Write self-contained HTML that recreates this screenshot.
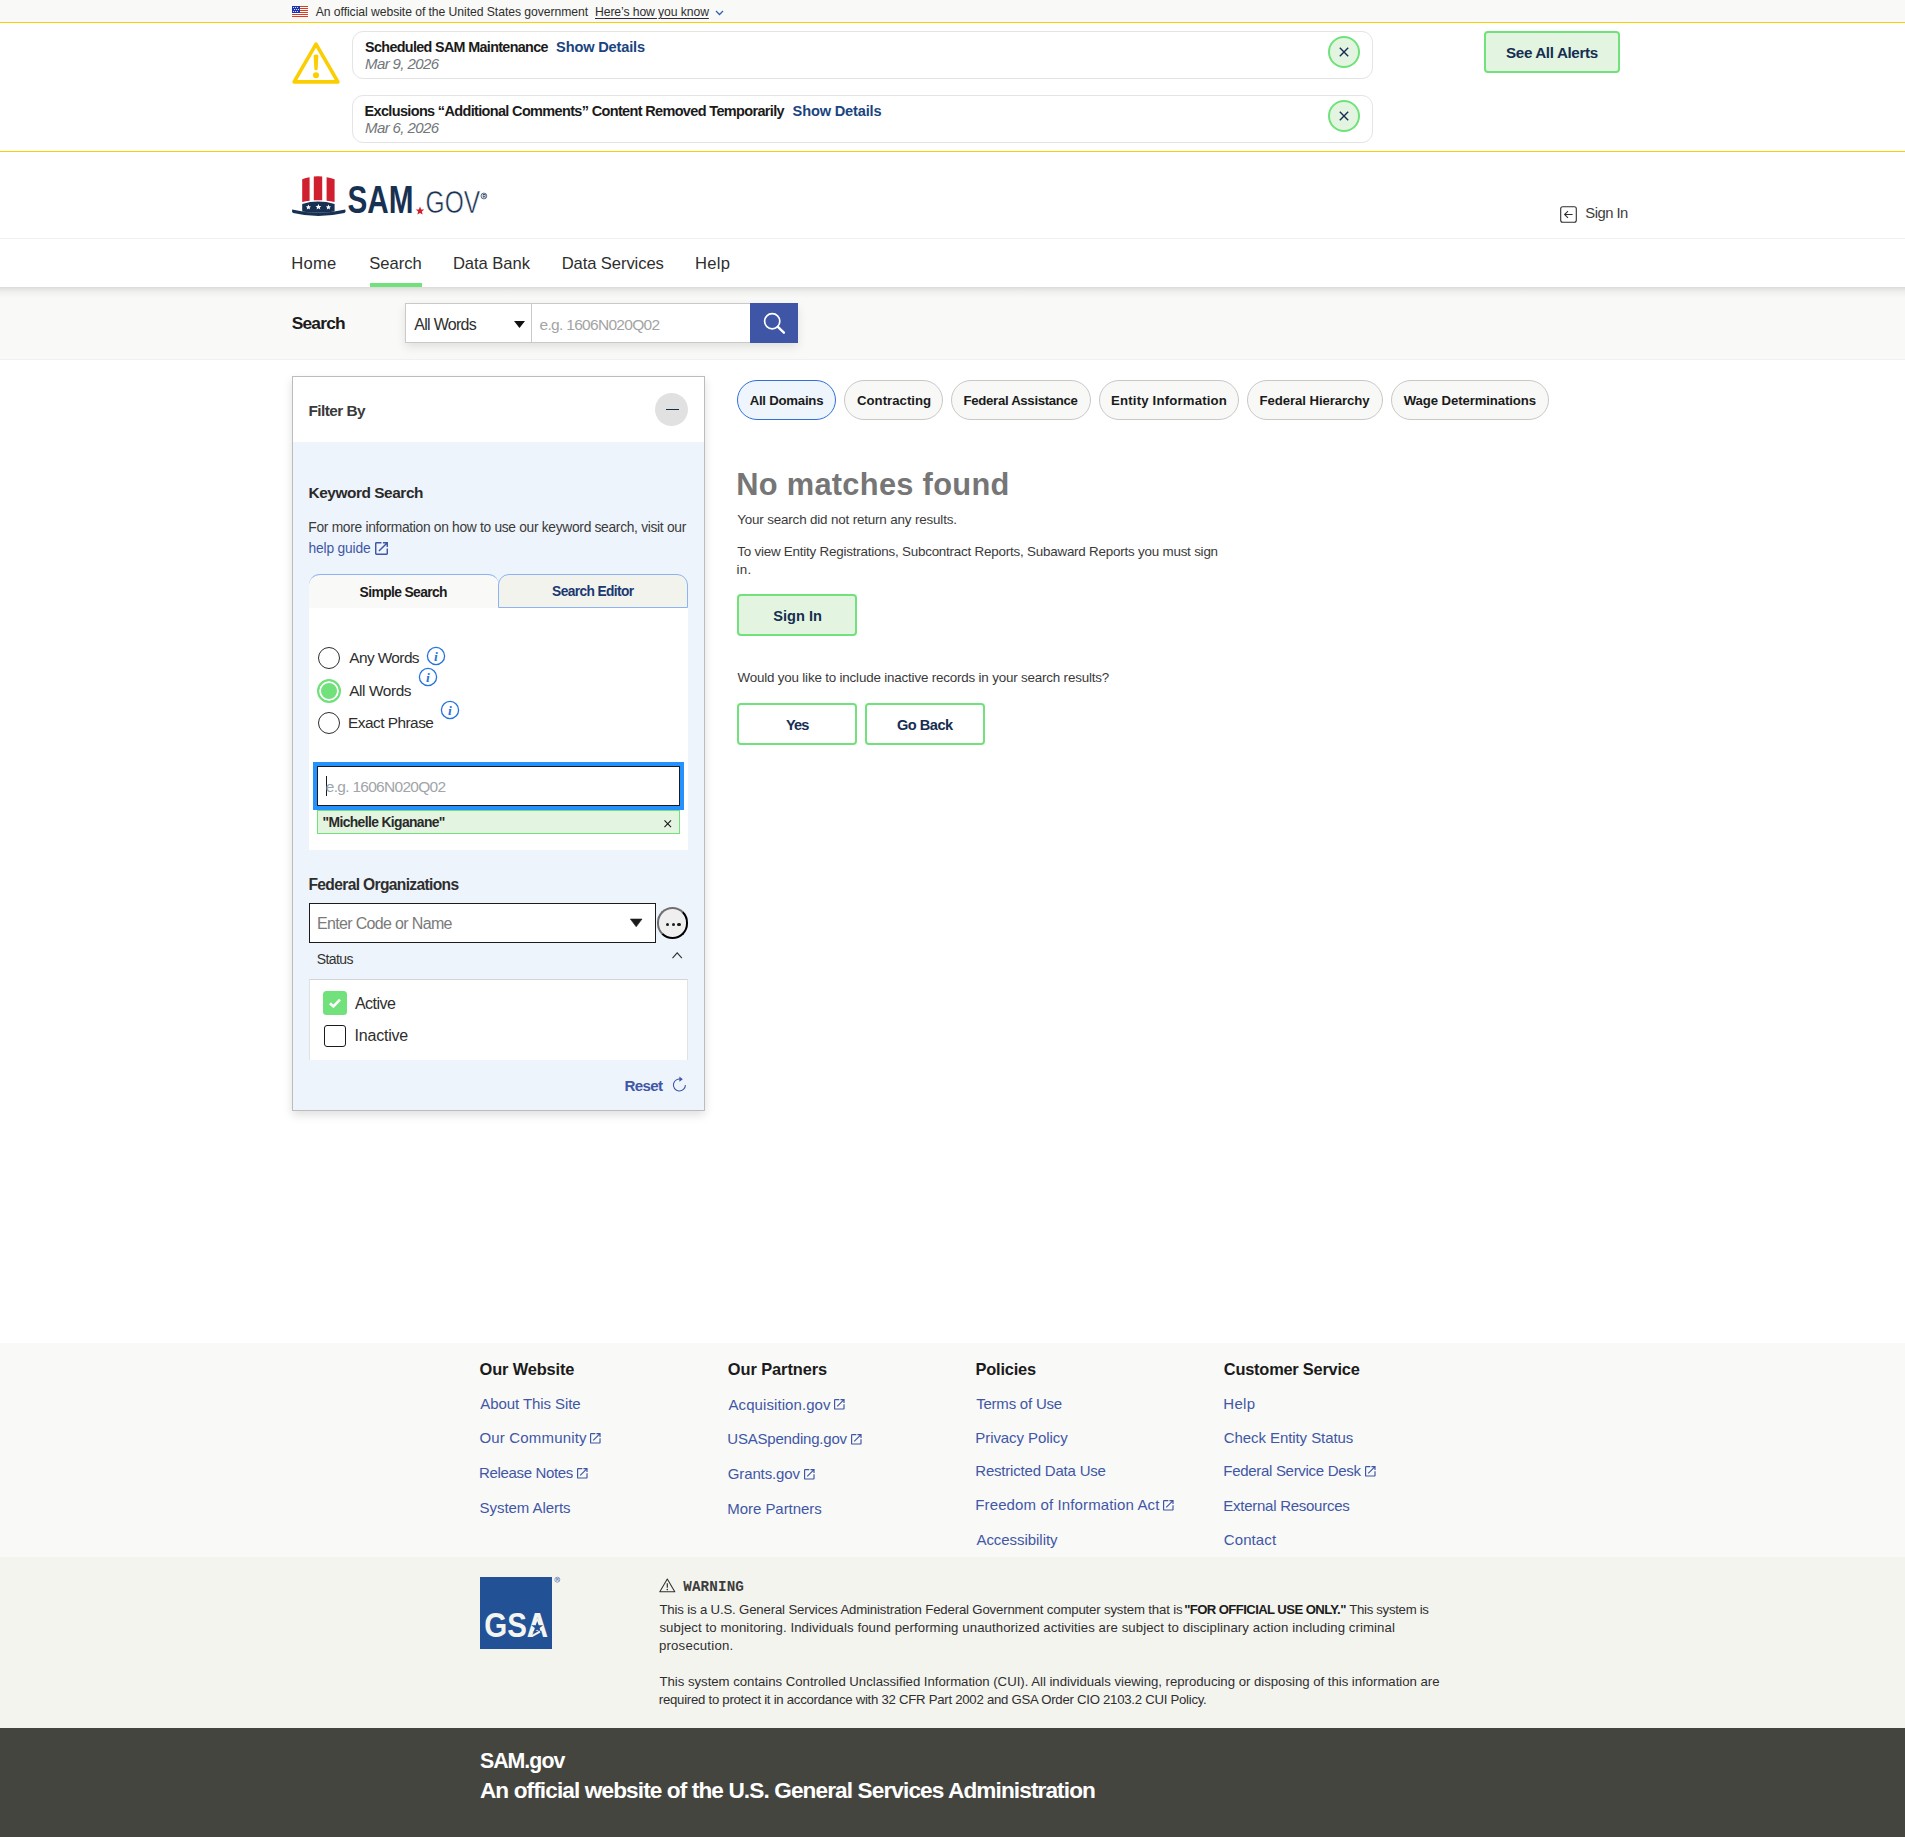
<!DOCTYPE html>
<html lang="en">
<head>
<meta charset="utf-8">
<title>SAM.gov | Search</title>
<style>
*{box-sizing:border-box;margin:0;padding:0}
html,body{width:1905px;height:1837px;overflow:hidden;background:#fff}
body{position:relative;font-family:"Liberation Sans",sans-serif;color:#2e2e2e;-webkit-font-smoothing:antialiased}
.b{position:absolute;display:block}
.t{position:absolute;white-space:nowrap;line-height:1;display:block}
svg{position:absolute;overflow:visible;display:block}
a{color:inherit;text-decoration:none}
</style>
</head>
<body>
<div class="b" style="left:0px;top:0px;width:1905px;height:22px;background:#f9f9f7"></div>
<svg style="left:292px;top:6px" width="16" height="11" viewBox="0 0 16 11"><rect width="16" height="11" fill="#fff"/><g fill="#db3e1f"><rect y="0" width="16" height="1"/><rect y="2" width="16" height="1"/><rect y="4" width="16" height="1"/><rect y="6" width="16" height="1"/><rect y="8" width="16" height="1"/><rect y="10" width="16" height="1"/></g><rect width="8" height="7" fill="#1e33b1"/><g fill="#fff"><circle cx="1.5" cy="1.5" r=".6"/><circle cx="3.5" cy="1.5" r=".6"/><circle cx="5.5" cy="1.5" r=".6"/><circle cx="2.5" cy="3.5" r=".6"/><circle cx="4.5" cy="3.5" r=".6"/><circle cx="6.5" cy="3.5" r=".6"/><circle cx="1.5" cy="5.5" r=".6"/><circle cx="3.5" cy="5.5" r=".6"/><circle cx="5.5" cy="5.5" r=".6"/></g></svg>
<span class="t" style="left:315.73px;top:5px;font-size:12.2px;line-height:14px;letter-spacing:-0.063px;">An official website of the United States government</span>
<span class="t" style="left:595.00px;top:5px;font-size:12.2px;line-height:14px;letter-spacing:-0.092px;text-decoration:underline;text-underline-offset:1.5px;">Here&rsquo;s how you know</span>
<svg style="left:715px;top:9.5px" width="9" height="6" viewBox="0 0 9 6"><path d="M1 1l3.5 3.5L8 1" fill="none" stroke="#2c63b8" stroke-width="1.3"/></svg>
<div class="b" style="left:0px;top:22px;width:1905px;height:130px;background:#fff;border-top:1.3px solid #face00;border-bottom:1.3px solid #face00"></div>
<svg style="left:292px;top:42px" width="48" height="42" viewBox="0 0 48 42"><path d="M24 2.1 L45.9 39.9 H2.1 Z" fill="none" stroke="#face00" stroke-width="3.6" stroke-linejoin="round"/><path d="M21.6 13.6 Q24 11.2 26.4 13.6 L25.6 27.4 Q24 29.2 22.4 27.4 Z" fill="#face00"/><circle cx="24" cy="33.3" r="3.05" fill="#face00"/></svg>
<div class="b" style="left:352px;top:31px;width:1021px;height:48px;border:1.5px solid #e4e4e4;border-radius:11px;background:#fff"></div>
<span class="t" style="left:365.09px;top:39px;font-size:14.32px;line-height:16px;font-weight:700;color:#1b1b1b;letter-spacing:-0.643px;">Scheduled SAM Maintenance</span>
<span class="t" style="left:556.08px;top:39px;font-size:14.6px;line-height:16px;font-weight:700;color:#1a4480;letter-spacing:-0.164px;">Show Details</span>
<span class="t" style="left:365.04px;top:55px;font-size:15px;line-height:17px;font-style:italic;color:#71767a;letter-spacing:-0.609px;">Mar 9, 2026</span>
<div class="b" style="left:1327.5px;top:36px;width:32px;height:32px;border:2px solid #70e17b;border-radius:50%;background:#e3f5e1"></div>
<svg style="left:1338.5px;top:47px" width="10" height="10" viewBox="0 0 10 10"><path d="M.8.8l8.4 8.4M9.2.8L.8 9.2" stroke="#162e51" stroke-width="1.4" fill="none"/></svg>
<div class="b" style="left:352px;top:95px;width:1021px;height:48px;border:1.5px solid #e4e4e4;border-radius:11px;background:#fff"></div>
<span class="t" style="left:364.53px;top:103px;font-size:14.49px;line-height:16px;font-weight:700;color:#1b1b1b;letter-spacing:-0.651px;">Exclusions &ldquo;Additional Comments&rdquo; Content Removed Temporarily</span>
<span class="t" style="left:792.58px;top:103px;font-size:14.6px;line-height:16px;font-weight:700;color:#1a4480;letter-spacing:-0.164px;">Show Details</span>
<span class="t" style="left:365.04px;top:119px;font-size:15px;line-height:17px;font-style:italic;color:#71767a;letter-spacing:-0.609px;">Mar 6, 2026</span>
<div class="b" style="left:1327.5px;top:100px;width:32px;height:32px;border:2px solid #70e17b;border-radius:50%;background:#e3f5e1"></div>
<svg style="left:1338.5px;top:111px" width="10" height="10" viewBox="0 0 10 10"><path d="M.8.8l8.4 8.4M9.2.8L.8 9.2" stroke="#162e51" stroke-width="1.4" fill="none"/></svg>
<div class="b" style="left:1484px;top:31px;width:136px;height:41.5px;border:2px solid #70e17b;border-radius:4px;background:#e3f5e1"></div>
<span class="t" style="left:1506.06px;top:44px;font-size:15.2px;line-height:17px;font-weight:700;color:#162e51;letter-spacing:-0.364px;">See All Alerts</span>
<div class="b" style="left:0px;top:238px;width:1905px;height:1px;background:#f0f0f0"></div>
<svg style="left:292px;top:176px" width="196" height="41" viewBox="0 0 196 41">
<path d="M10.2 3.2 Q13.8 1.6 17.6 1.2 V24.7 Q13.6 25.1 10.2 26.1 Z" fill="#d01f2e"/>
<path d="M21.8 0.6 Q26 0 30.2 0.6 V24.3 Q26 24.1 21.8 24.3 Z" fill="#d01f2e"/>
<path d="M34.6 1.2 Q38.4 1.6 42.6 3.2 V26.1 Q38.6 25.1 34.6 24.7 Z" fill="#d01f2e"/>
<path d="M10.2 27.9 Q26 23.3 42.6 27.9 V35.6 Q26 38 10.2 35.6 Z" fill="#183153"/>
<path d="M0.2 33.5 Q26 40.1 53.2 33.5 L53.6 35.3 Q53.6 36.5 52.4 36.9 Q26 42.9 1.2 36.9 Q0 36.5 0 35.3 Z" fill="#183153"/>
<g fill="#fff" transform="translate(0,-1.7)"><path d="M16.4 30.3l.75 1.7 1.85.15-1.4 1.2.45 1.8-1.65-1-1.6 1 .45-1.8-1.4-1.2 1.85-.15z"/><path d="M26.4 29.7l.85 1.9 2.05.2-1.55 1.35.5 2-1.85-1.1-1.8 1.1.5-2-1.55-1.35 2.05-.2z"/><path d="M36.4 30.3l.75 1.7 1.85.15-1.4 1.2.45 1.8-1.65-1-1.6 1 .45-1.8-1.4-1.2 1.85-.15z"/></g>
<text x="55.5" y="37" font-family="Liberation Sans, sans-serif" font-weight="700" font-size="39.4" fill="#183153" textLength="66" lengthAdjust="spacingAndGlyphs">SAM</text>
<path d="M128 30.5l1.15 2.9 3.1.2-2.4 2 .8 3-2.65-1.7-2.65 1.7.8-3-2.4-2 3.1-.2z" fill="#d01f2e"/>
<text x="133.6" y="37.2" font-family="Liberation Sans, sans-serif" font-weight="400" font-size="30.6" fill="#183153" stroke="#fff" stroke-width="0.55" paint-order="fill stroke" textLength="54.5" lengthAdjust="spacingAndGlyphs">GOV</text>
<circle cx="191.9" cy="20" r="2.9" fill="none" stroke="#183153" stroke-width="0.7"/>
<text x="190.4" y="21.8" font-family="Liberation Sans, sans-serif" font-weight="700" font-size="4.6" fill="#183153">R</text>
</svg>
<svg style="left:1560px;top:206px" width="17" height="17" viewBox="0 0 17 17"><rect x=".7" y=".7" width="15.6" height="15.6" rx="2" fill="none" stroke="#2e2e2e" stroke-width="1.1"/><path d="M12.6 8.5H4.8M8 5.2L4.6 8.5 8 11.8" fill="none" stroke="#2e2e2e" stroke-width="1.05"/></svg>
<span class="t" style="left:1585.33px;top:205px;font-size:14.8px;line-height:16px;color:#3d3d3d;letter-spacing:-0.507px;">Sign In</span>
<span class="t" style="left:291.14px;top:254px;font-size:16.6px;line-height:19px;letter-spacing:0.300px;">Home</span>
<span class="t" style="left:369.25px;top:254px;font-size:16.6px;line-height:19px;">Search</span>
<span class="t" style="left:452.89px;top:254px;font-size:16.6px;line-height:19px;letter-spacing:-0.050px;">Data Bank</span>
<span class="t" style="left:561.64px;top:254px;font-size:16.6px;line-height:19px;letter-spacing:-0.090px;">Data Services</span>
<span class="t" style="left:694.89px;top:254px;font-size:16.6px;line-height:19px;letter-spacing:0.300px;">Help</span>
<div class="b" style="left:370px;top:283px;width:51.5px;height:4px;background:#70e17b"></div>
<div class="b" style="left:0px;top:287px;width:1905px;height:72.5px;background:#f9f9f7;border-bottom:1px solid #f0f0ee"></div>
<div class="b" style="left:0px;top:287px;width:1905px;height:11px;background:linear-gradient(rgba(0,0,0,.12),rgba(0,0,0,.045) 40%,rgba(0,0,0,0))"></div>
<span class="t" style="left:291.70px;top:313px;font-size:17.36px;line-height:20px;font-weight:700;color:#1b1b1b;letter-spacing:-0.786px;">Search</span>
<div class="b" style="left:405px;top:303px;width:393px;height:40px;box-shadow:0 4px 9px rgba(0,0,0,.1);background:#fff"></div>
<div class="b" style="left:405px;top:303px;width:127px;height:40px;background:#fff;border:1px solid #c9c9c9"></div>
<span class="t" style="left:414.37px;top:316px;font-size:15.99px;line-height:17px;letter-spacing:-0.725px;">All Words</span>
<svg style="left:513.5px;top:321.3px" width="11" height="7" viewBox="0 0 11 7"><path d="M0 0h11L5.5 7z" fill="#111"/></svg>
<div class="b" style="left:531px;top:303px;width:219.5px;height:40px;background:#fff;border:1px solid #c9c9c9"></div>
<span class="t" style="left:539.54px;top:316px;font-size:15.51px;line-height:17px;color:#a4a4a4;letter-spacing:-0.697px;">e.g. 1606N020Q02</span>
<div class="b" style="left:750px;top:303px;width:48px;height:40px;background:#3f55a6"></div>
<svg style="left:762px;top:311px" width="24" height="24" viewBox="0 0 24 24"><circle cx="10.2" cy="10.2" r="7.6" fill="none" stroke="#fff" stroke-width="1.7"/><path d="M15.9 15.9l6 5.8" stroke="#fff" stroke-width="2.4" stroke-linecap="round"/></svg>
<div class="b" style="left:292px;top:376px;width:413px;height:735px;background:#eef4fb;border:1px solid #bcbcbc;box-shadow:0 4px 9px rgba(0,0,0,.13)"></div>
<div class="b" style="left:293px;top:377px;width:411px;height:65px;background:#fff"></div>
<span class="t" style="left:308.47px;top:402px;font-size:15.4px;line-height:17px;font-weight:700;color:#3a3a3a;letter-spacing:-0.558px;">Filter By</span>
<div class="b" style="left:655.25px;top:393px;width:33px;height:33px;border-radius:50%;background:#e1e1e1"></div>
<div class="b" style="left:665.5px;top:409px;width:13.8px;height:1.3px;background:#162e51"></div>
<span class="t" style="left:308.47px;top:484px;font-size:15.4px;line-height:17px;font-weight:700;color:#2a2a2a;letter-spacing:-0.433px;">Keyword Search</span>
<span class="t" style="left:308.37px;top:520px;font-size:13.8px;line-height:15px;color:#3a3a3a;letter-spacing:-0.307px;">For more information on how to use our keyword search, visit our</span>
<span class="t" style="left:308.54px;top:541px;font-size:13.8px;line-height:15px;color:#3f57a6;letter-spacing:-0.180px;">help guide</span>
<svg style="left:374.5px;top:542.3px" width="13" height="13" viewBox="3 3 18 18"><path fill="#3f57a6" d="M19 19H5V5h7V3H5a2 2 0 0 0-2 2v14a2 2 0 0 0 2 2h14c1.1 0 2-.9 2-2v-7h-2v7zM14 3v2h3.59l-9.83 9.83 1.41 1.41L19 6.41V10h2V3h-7z"/></svg>
<div class="b" style="left:309px;top:607px;width:379px;height:243px;background:#fff"></div>
<div class="b" style="left:309px;top:574px;width:189.5px;height:33.5px;background:#f9f9f7;border-top:1px solid #8db3f3;border-radius:11px 11px 0 0"></div>
<div class="b" style="left:498px;top:574px;width:190px;height:34px;background:#f3f3ee;border:1px solid #8db3f3;border-radius:11px 11px 0 0"></div>
<span class="t" style="left:359.60px;top:584px;font-size:13.86px;line-height:16px;font-weight:700;color:#1b1b1b;letter-spacing:-0.627px;">Simple Search</span>
<span class="t" style="left:552.10px;top:584px;font-size:13.78px;line-height:15px;font-weight:700;color:#1a3872;letter-spacing:-0.618px;">Search Editor</span>
<div class="b" style="left:318px;top:646.5px;width:22px;height:22px;border-radius:50%;background:#fff;border:1.5px solid #2e2e2e"></div>
<span class="t" style="left:349.22px;top:649px;font-size:15.4px;line-height:17px;letter-spacing:-0.581px;">Any Words</span>
<svg style="left:426.25px;top:646.25px" width="20" height="20" viewBox="0 0 20 20"><circle cx="10" cy="10" r="8.6" fill="none" stroke="#2672de" stroke-width="1.3"/><text x="10" y="14.6" text-anchor="middle" font-family="Liberation Serif, serif" font-style="italic" font-weight="700" font-size="13.5" fill="#2672de">i</text></svg>
<div class="b" style="left:317px;top:678.75px;width:24px;height:24px;border-radius:50%;background:#70e17b;border:2.2px solid #70e17b;box-shadow:inset 0 0 0 2px #fff"></div>
<span class="t" style="left:349.22px;top:682px;font-size:15.4px;line-height:17px;letter-spacing:-0.405px;">All Words</span>
<svg style="left:418.25px;top:667.25px" width="20" height="20" viewBox="0 0 20 20"><circle cx="10" cy="10" r="8.6" fill="none" stroke="#2672de" stroke-width="1.3"/><text x="10" y="14.6" text-anchor="middle" font-family="Liberation Serif, serif" font-style="italic" font-weight="700" font-size="13.5" fill="#2672de">i</text></svg>
<div class="b" style="left:318px;top:712px;width:22px;height:22px;border-radius:50%;background:#fff;border:1.5px solid #2e2e2e"></div>
<span class="t" style="left:347.99px;top:714px;font-size:15.4px;line-height:17px;letter-spacing:-0.509px;">Exact Phrase</span>
<svg style="left:440.25px;top:700.25px" width="20" height="20" viewBox="0 0 20 20"><circle cx="10" cy="10" r="8.6" fill="none" stroke="#2672de" stroke-width="1.3"/><text x="10" y="14.6" text-anchor="middle" font-family="Liberation Serif, serif" font-style="italic" font-weight="700" font-size="13.5" fill="#2672de">i</text></svg>
<div class="b" style="left:313px;top:762px;width:371px;height:48px;background:#2491ff"></div>
<div class="b" style="left:317px;top:766px;width:363px;height:40px;background:#fff;border:1px solid #1b1b1b"></div>
<div class="b" style="left:326px;top:776px;width:1px;height:20px;background:#1b1b1b"></div>
<span class="t" style="left:325.84px;top:778px;font-size:15.46px;line-height:17px;color:#a0a5a9;letter-spacing:-0.695px;">e.g. 1606N020Q02</span>
<div class="b" style="left:317px;top:810px;width:363px;height:23.5px;background:#e3f5e1;border:1px solid #70e17b"></div>
<span class="t" style="left:322.59px;top:814px;font-size:13.86px;line-height:16px;font-weight:700;color:#2a2a2a;letter-spacing:-0.624px;">&quot;Michelle Kiganane&quot;</span>
<svg style="left:663.5px;top:819.5px" width="7.5" height="7.5" viewBox="0 0 10 10"><path d="M.6.6l8.8 8.8M9.4.6L.6 9.4" stroke="#1b1b1b" stroke-width="1.5" fill="none"/></svg>
<span class="t" style="left:308.46px;top:876px;font-size:15.6px;line-height:17px;font-weight:700;letter-spacing:-0.655px;">Federal Organizations</span>
<div class="b" style="left:309px;top:903px;width:347px;height:39.5px;background:#fff;border:1px solid #1b1b1b"></div>
<span class="t" style="left:316.94px;top:915px;font-size:16px;line-height:17px;color:#7a7a7a;letter-spacing:-0.659px;">Enter Code or Name</span>
<svg style="left:630px;top:919.2px" width="12.4" height="7.8" viewBox="0 0 12 8"><path d="M0 0h12L6 8z" fill="#1b1b1b" stroke="#1b1b1b" stroke-width=".6" stroke-linejoin="round"/></svg>
<div class="b" style="left:656.7px;top:907.2px;width:31.4px;height:31.4px;border-radius:50%;background:#efefef;border:2px solid #000;border-top-color:#6f6f6f;border-left-color:#6f6f6f"></div>
<div class="b" style="left:665.9px;top:922.7px;width:3.3px;height:3.3px;border-radius:50%;background:#1b1b1b"></div>
<div class="b" style="left:671.6px;top:922.7px;width:3.3px;height:3.3px;border-radius:50%;background:#1b1b1b"></div>
<div class="b" style="left:677.3px;top:922.7px;width:3.3px;height:3.3px;border-radius:50%;background:#1b1b1b"></div>
<span class="t" style="left:316.86px;top:951px;font-size:14px;line-height:16px;color:#333;letter-spacing:-0.612px;">Status</span>
<svg style="left:671.5px;top:951.7px" width="10.4" height="6.6" viewBox="0 0 10.4 6.6"><path d="M.5 6.1L5.2.9l4.7 5.2" fill="none" stroke="#2e2e2e" stroke-width="1.1"/></svg>
<div class="b" style="left:309px;top:979px;width:379px;height:80.5px;background:#fff;border:1px solid #e0e3e6;border-top-color:#d2d4d6;border-bottom:none"></div>
<div class="b" style="left:323px;top:991px;width:24px;height:24px;background:#70e17b;border-radius:3.5px"></div>
<svg style="left:328px;top:997px" width="14" height="12" viewBox="0 0 14 12"><path d="M2 6.2l3.4 3.3L12 2.6" fill="none" stroke="#fff" stroke-width="2.6"/></svg>
<span class="t" style="left:354.97px;top:995px;font-size:16px;line-height:17px;letter-spacing:-0.517px;">Active</span>
<div class="b" style="left:324px;top:1025px;width:22px;height:22px;background:#fff;border:1.5px solid #1b1b1b;border-radius:3px"></div>
<span class="t" style="left:354.52px;top:1027px;font-size:16px;line-height:17px;letter-spacing:-0.208px;">Inactive</span>
<span class="t" style="left:624.49px;top:1077px;font-size:15.12px;line-height:17px;font-weight:700;color:#3f57a6;letter-spacing:-0.678px;">Reset</span>
<svg style="left:671.8px;top:1076px" width="15" height="16" viewBox="0 0 15 16"><path d="M9.2 3.3A6 6 0 1 0 13.4 9" fill="none" stroke="#3f57a6" stroke-width="1.1"/><path d="M7.4 0.6l3.4 2.6-3.4 2.5z" fill="#3f57a6"/></svg>
<div class="b" style="left:737px;top:380px;width:98.75px;height:39.5px;background:#eef5fd;border:1.3px solid #2f6fdc;border-radius:20px"></div>
<span class="t" style="left:749.67px;top:393px;font-size:13.2px;line-height:15px;font-weight:700;color:#1b1b1b;letter-spacing:-0.235px;">All Domains</span>
<div class="b" style="left:844.25px;top:380px;width:98.75px;height:39.5px;background:#f8f8f6;border:1px solid #c8c8c8;border-radius:20px"></div>
<span class="t" style="left:856.96px;top:393px;font-size:13.2px;line-height:15px;font-weight:700;color:#1b1b1b;letter-spacing:0.017px;">Contracting</span>
<div class="b" style="left:951px;top:380px;width:139.75px;height:39.5px;background:#f8f8f6;border:1px solid #c8c8c8;border-radius:20px"></div>
<span class="t" style="left:963.62px;top:393px;font-size:13.2px;line-height:15px;font-weight:700;color:#1b1b1b;letter-spacing:-0.318px;">Federal Assistance</span>
<div class="b" style="left:1099px;top:380px;width:140px;height:39.5px;background:#f8f8f6;border:1px solid #c8c8c8;border-radius:20px"></div>
<span class="t" style="left:1111.12px;top:393px;font-size:13.2px;line-height:15px;font-weight:700;color:#1b1b1b;letter-spacing:0.169px;">Entity Information</span>
<div class="b" style="left:1247.25px;top:380px;width:135.75px;height:39.5px;background:#f8f8f6;border:1px solid #c8c8c8;border-radius:20px"></div>
<span class="t" style="left:1259.62px;top:393px;font-size:13.2px;line-height:15px;font-weight:700;color:#1b1b1b;letter-spacing:-0.092px;">Federal Hierarchy</span>
<div class="b" style="left:1391px;top:380px;width:158px;height:39.5px;background:#f8f8f6;border:1px solid #c8c8c8;border-radius:20px"></div>
<span class="t" style="left:1403.74px;top:393px;font-size:13.2px;line-height:15px;font-weight:700;color:#1b1b1b;letter-spacing:-0.113px;">Wage Determinations</span>
<h1 class="t" style="left:736.19px;top:467px;font-size:30.8px;line-height:35px;font-weight:700;color:#767676;letter-spacing:0.300px;">No matches found</h1>
<span class="t" style="left:737.21px;top:512px;font-size:13.4px;line-height:15px;color:#3a3a3a;letter-spacing:-0.159px;">Your search did not return any results.</span>
<span class="t" style="left:737.20px;top:544px;font-size:13.4px;line-height:15px;color:#3a3a3a;letter-spacing:-0.213px;">To view Entity Registrations, Subcontract Reports, Subaward Reports you must sign</span>
<span class="t" style="left:736.60px;top:562px;font-size:13.4px;line-height:15px;color:#3a3a3a;letter-spacing:0.300px;">in.</span>
<div class="b" style="left:737px;top:594px;width:120px;height:41.5px;border:2px solid #70e17b;border-radius:4px;background:#e3f5e1"></div>
<span class="t" style="left:773.33px;top:608px;font-size:14.6px;line-height:16px;font-weight:700;color:#162e51;letter-spacing:-0.013px;">Sign In</span>
<span class="t" style="left:737.44px;top:670px;font-size:13.4px;line-height:15px;color:#3a3a3a;letter-spacing:-0.185px;">Would you like to include inactive records in your search results?</span>
<div class="b" style="left:737px;top:703px;width:120px;height:41.5px;border:2px solid #70e17b;border-radius:4px;background:#fff"></div>
<span class="t" style="left:786.00px;top:717px;font-size:14.6px;line-height:16px;font-weight:700;color:#162e51;letter-spacing:-0.912px;">Yes</span>
<div class="b" style="left:865px;top:703px;width:120px;height:41.5px;border:2px solid #70e17b;border-radius:4px;background:#fff"></div>
<span class="t" style="left:896.90px;top:717px;font-size:14.6px;line-height:16px;font-weight:700;color:#162e51;letter-spacing:-0.481px;">Go Back</span>
<div class="b" style="left:0px;top:1343px;width:1905px;height:214px;background:#f9f9f7"></div>
<div class="b" style="left:0px;top:1557px;width:1905px;height:171px;background:#f4f4ef"></div>
<div class="b" style="left:0px;top:1728px;width:1905px;height:109px;background:#454540"></div>
<span class="t" style="left:479.58px;top:1360px;font-size:16.4px;line-height:18px;font-weight:700;color:#1b1b1b;letter-spacing:-0.152px;">Our Website</span>
<span class="t" style="left:480.22px;top:1395px;font-size:15px;line-height:17px;color:#3f57a6;letter-spacing:-0.072px;">About This Site</span>
<span class="t" style="left:479.54px;top:1429px;font-size:15px;line-height:17px;color:#3f57a6;letter-spacing:0.163px;">Our Community</span>
<svg style="left:590.3px;top:1432.8px" width="10.6" height="10.6" viewBox="3 3 18 18"><path fill="#3f57a6" d="M19 19H5V5h7V3H5a2 2 0 0 0-2 2v14a2 2 0 0 0 2 2h14c1.1 0 2-.9 2-2v-7h-2v7zM14 3v2h3.59l-9.83 9.83 1.41 1.41L19 6.41V10h2V3h-7z"/></svg>
<span class="t" style="left:479.02px;top:1464px;font-size:15px;line-height:17px;color:#3f57a6;letter-spacing:-0.343px;">Release Notes</span>
<svg style="left:576.55px;top:1467.8px" width="10.6" height="10.6" viewBox="3 3 18 18"><path fill="#3f57a6" d="M19 19H5V5h7V3H5a2 2 0 0 0-2 2v14a2 2 0 0 0 2 2h14c1.1 0 2-.9 2-2v-7h-2v7zM14 3v2h3.59l-9.83 9.83 1.41 1.41L19 6.41V10h2V3h-7z"/></svg>
<span class="t" style="left:479.57px;top:1499px;font-size:15px;line-height:17px;color:#3f57a6;letter-spacing:-0.061px;">System Alerts</span>
<span class="t" style="left:727.83px;top:1360px;font-size:16.4px;line-height:18px;font-weight:700;color:#1b1b1b;letter-spacing:-0.078px;">Our Partners</span>
<span class="t" style="left:728.47px;top:1396px;font-size:15px;line-height:17px;color:#3f57a6;letter-spacing:0.084px;">Acquisition.gov</span>
<svg style="left:834.3px;top:1399.05px" width="10.6" height="10.6" viewBox="3 3 18 18"><path fill="#3f57a6" d="M19 19H5V5h7V3H5a2 2 0 0 0-2 2v14a2 2 0 0 0 2 2h14c1.1 0 2-.9 2-2v-7h-2v7zM14 3v2h3.59l-9.83 9.83 1.41 1.41L19 6.41V10h2V3h-7z"/></svg>
<span class="t" style="left:727.34px;top:1430px;font-size:15px;line-height:17px;color:#3f57a6;letter-spacing:-0.206px;">USASpending.gov</span>
<svg style="left:850.8px;top:1433.8px" width="10.6" height="10.6" viewBox="3 3 18 18"><path fill="#3f57a6" d="M19 19H5V5h7V3H5a2 2 0 0 0-2 2v14a2 2 0 0 0 2 2h14c1.1 0 2-.9 2-2v-7h-2v7zM14 3v2h3.59l-9.83 9.83 1.41 1.41L19 6.41V10h2V3h-7z"/></svg>
<span class="t" style="left:727.75px;top:1465px;font-size:15px;line-height:17px;color:#3f57a6;letter-spacing:-0.119px;">Grants.gov</span>
<svg style="left:803.8px;top:1468.8px" width="10.6" height="10.6" viewBox="3 3 18 18"><path fill="#3f57a6" d="M19 19H5V5h7V3H5a2 2 0 0 0-2 2v14a2 2 0 0 0 2 2h14c1.1 0 2-.9 2-2v-7h-2v7zM14 3v2h3.59l-9.83 9.83 1.41 1.41L19 6.41V10h2V3h-7z"/></svg>
<span class="t" style="left:727.27px;top:1500px;font-size:15px;line-height:17px;color:#3f57a6;letter-spacing:-0.044px;">More Partners</span>
<span class="t" style="left:975.40px;top:1360px;font-size:16.4px;line-height:18px;font-weight:700;color:#1b1b1b;letter-spacing:-0.169px;">Policies</span>
<span class="t" style="left:976.16px;top:1395px;font-size:15px;line-height:17px;color:#3f57a6;letter-spacing:-0.214px;">Terms of Use</span>
<span class="t" style="left:975.27px;top:1429px;font-size:15px;line-height:17px;color:#3f57a6;letter-spacing:-0.065px;">Privacy Policy</span>
<span class="t" style="left:975.27px;top:1462px;font-size:15px;line-height:17px;color:#3f57a6;letter-spacing:-0.198px;">Restricted Data Use</span>
<span class="t" style="left:975.27px;top:1496px;font-size:15px;line-height:17px;color:#3f57a6;letter-spacing:0.127px;">Freedom of Information Act</span>
<svg style="left:1163.05px;top:1499.8px" width="10.6" height="10.6" viewBox="3 3 18 18"><path fill="#3f57a6" d="M19 19H5V5h7V3H5a2 2 0 0 0-2 2v14a2 2 0 0 0 2 2h14c1.1 0 2-.9 2-2v-7h-2v7zM14 3v2h3.59l-9.83 9.83 1.41 1.41L19 6.41V10h2V3h-7z"/></svg>
<span class="t" style="left:976.47px;top:1531px;font-size:15px;line-height:17px;color:#3f57a6;letter-spacing:-0.052px;">Accessibility</span>
<span class="t" style="left:1223.83px;top:1360px;font-size:16.4px;line-height:18px;font-weight:700;color:#1b1b1b;letter-spacing:-0.227px;">Customer Service</span>
<span class="t" style="left:1223.27px;top:1395px;font-size:15px;line-height:17px;color:#3f57a6;letter-spacing:0.300px;">Help</span>
<span class="t" style="left:1223.74px;top:1429px;font-size:15px;line-height:17px;color:#3f57a6;letter-spacing:-0.075px;">Check Entity Status</span>
<span class="t" style="left:1223.27px;top:1462px;font-size:15px;line-height:17px;color:#3f57a6;letter-spacing:-0.299px;">Federal Service Desk</span>
<svg style="left:1364.8px;top:1465.8px" width="10.6" height="10.6" viewBox="3 3 18 18"><path fill="#3f57a6" d="M19 19H5V5h7V3H5a2 2 0 0 0-2 2v14a2 2 0 0 0 2 2h14c1.1 0 2-.9 2-2v-7h-2v7zM14 3v2h3.59l-9.83 9.83 1.41 1.41L19 6.41V10h2V3h-7z"/></svg>
<span class="t" style="left:1223.27px;top:1497px;font-size:15px;line-height:17px;color:#3f57a6;letter-spacing:-0.258px;">External Resources</span>
<span class="t" style="left:1223.74px;top:1531px;font-size:15px;line-height:17px;color:#3f57a6;letter-spacing:0.111px;">Contact</span>
<div class="b" style="left:480px;top:1577px;width:72px;height:72px;background:#225196"></div>
<svg style="left:480px;top:1577px" width="82" height="72" viewBox="0 0 82 72"><text x="4.2" y="59.9" font-family="Liberation Sans, sans-serif" font-weight="700" font-size="34.4" fill="#f4f4f1" textLength="64" lengthAdjust="spacingAndGlyphs">GSA</text><path d="M57.4 40.5L52 50.6h10.8z" fill="#f4f4f1"/><path d="M57.2 44L58.67 48.18 63.1 48.3 59.58 50.97 60.8 55.2 57.2 52.7 53.6 55.2 54.82 50.97 51.3 48.3 55.73 48.18z" fill="#225196"/><path d="M48.6 60L59.6 53.6 60.4 55.4 52.4 60z" fill="#f4f4f1"/><circle cx="77.3" cy="2.7" r="2.5" fill="none" stroke="#5877b3" stroke-width=".7"/><text x="75.9" y="4.2" font-family="Liberation Sans, sans-serif" font-weight="700" font-size="3.9" fill="#5877b3">R</text></svg>
<svg style="left:659px;top:1578px" width="16.6" height="14.4" viewBox="0 0 16.6 14.4"><path d="M8.3 1L15.8 13.8H.8z" fill="none" stroke="#2e2e2e" stroke-width="1.05" stroke-linejoin="round"/><path d="M8.3 5.2v4.6" stroke="#2e2e2e" stroke-width="1.2"/><circle cx="8.3" cy="11.6" r=".8" fill="#2e2e2e"/></svg>
<span class="t" style="left:683.25px;top:1579px;font-size:14.3px;line-height:16px;font-weight:700;font-family:'Liberation Mono', monospace;color:#3d3d3d;letter-spacing:0.107px;">WARNING</span>
<span class="t" style="left:659.45px;top:1602px;font-size:13.2px;line-height:15px;letter-spacing:-0.161px;">This is a U.S. General Services Administration Federal Government computer system that is</span>
<span class="t" style="left:1184.13px;top:1602px;font-size:13.14px;line-height:15px;font-weight:700;color:#1b1b1b;letter-spacing:-0.590px;">&quot;FOR OFFICIAL USE ONLY.&quot;</span>
<span class="t" style="left:1349.20px;top:1602px;font-size:13.2px;line-height:15px;letter-spacing:-0.289px;">This system is</span>
<span class="t" style="left:659.38px;top:1620px;font-size:13.2px;line-height:15px;letter-spacing:0.088px;">subject to monitoring. Individuals found performing unauthorized activities are subject to disciplinary action including criminal</span>
<span class="t" style="left:658.90px;top:1638px;font-size:13.2px;line-height:15px;letter-spacing:0.224px;">prosecution.</span>
<span class="t" style="left:659.45px;top:1674px;font-size:13.2px;line-height:15px;letter-spacing:-0.020px;">This system contains Controlled Unclassified Information (CUI). All individuals viewing, reproducing or disposing of this information are</span>
<span class="t" style="left:658.87px;top:1692px;font-size:13.2px;line-height:15px;letter-spacing:-0.267px;">required to protect it in accordance with 32 CFR Part 2002 and GSA Order CIO 2103.2 CUI Policy.</span>
<span class="t" style="left:479.89px;top:1749px;font-size:21.33px;line-height:24px;font-weight:700;color:#fff;letter-spacing:-0.965px;">SAM.gov</span>
<span class="t" style="left:479.94px;top:1778px;font-size:22.6px;line-height:25px;font-weight:700;color:#fff;letter-spacing:-0.886px;">An official website of the U.S. General Services Administration</span>
</body>
</html>
